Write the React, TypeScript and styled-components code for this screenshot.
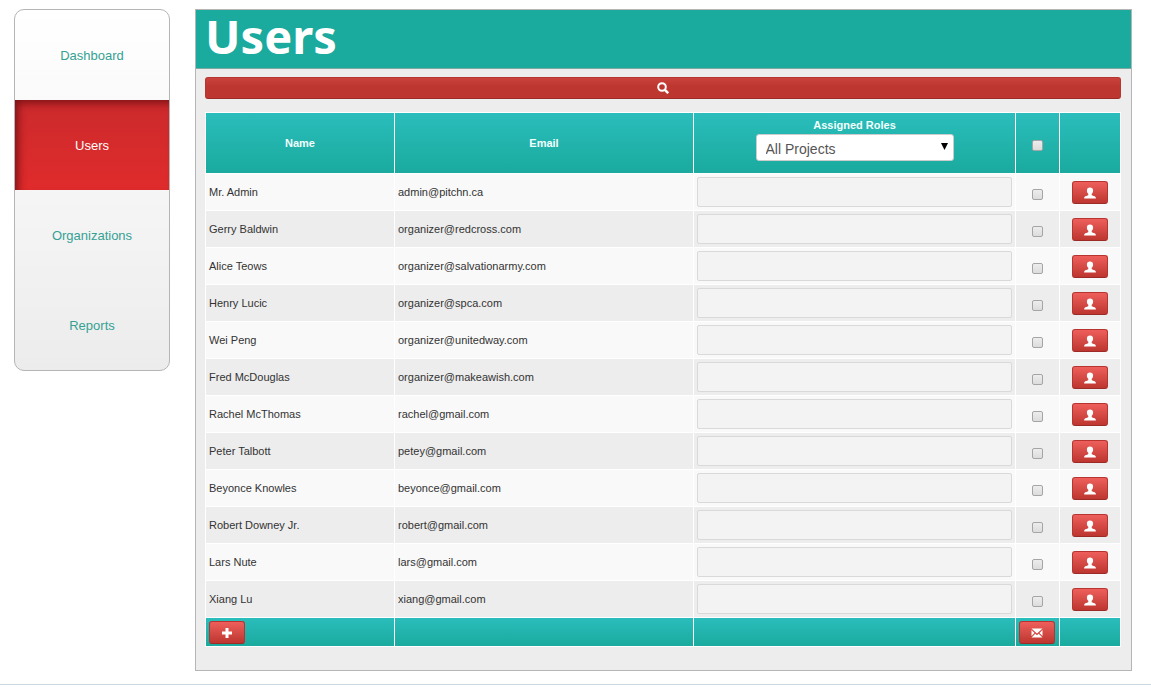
import React from "react";
import styled, { createGlobalStyle, css } from "styled-components";

const Global = createGlobalStyle`
  * { box-sizing: border-box; }
  body {
    margin: 0;
    background: #fff;
    color: #333;
    font: 11px/20px "Liberation Sans", Arial, sans-serif;
  }
`;

const Layout = styled.div`
  display: flex;
  align-items: flex-start;
  gap: 25px;
  padding: 9px 19px 13px 14px;
`;

const Sidebar = styled.nav`
  flex: 0 0 156px;
  display: flex;
  flex-direction: column;
  border: 1px solid #b5b5b5;
  border-radius: 10px;
  overflow: hidden;
  background: linear-gradient(#fff, #ececec);
`;

const NavLink = styled.a<{ $active?: boolean }>`
  padding-top: 2px;
  line-height: 88px;
  font-size: 13px;
  text-align: center;
  text-decoration: none;
  color: #35a193;
  ${(p) =>
    p.$active &&
    css`
      color: #fff;
      background: linear-gradient(#cb2a2d, #e02b2b);
      box-shadow: inset 5px 5px 8px -2px #7c1214;
    `}
`;

const Panel = styled.main`
  flex: 1;
  min-width: 0;
  border: 1px solid #b5b5b5;
  background: #ededed;
`;

const PanelHeader = styled.header`
  padding: 0 9px;
  background: #1aaa9e;
  border-bottom: 1px solid #7fa8a3;
`;

const Title = styled.h1`
  margin: 0;
  padding-bottom: 6px;
  color: #fff;
  font: bold 47px/52px "Noto Sans", "Open Sans", sans-serif;
`;

const PanelBody = styled.div`
  padding: 8px 10px 23px 9px;
`;

const redButton = css`
  display: inline-flex;
  align-items: center;
  justify-content: center;
  padding: 0;
  border: 1px solid #b73531;
  border-bottom-color: #9c2a26;
  border-radius: 3px;
  color: #fff;
  cursor: pointer;
`;

const SearchButton = styled.button`
  ${redButton}
  width: 100%;
  height: 22px;
  margin-bottom: 13px;
  background: linear-gradient(#c9423d, #bd362f 40%);
`;

const IconButton = styled.button`
  ${redButton}
  width: 36px;
  height: 23px;
  padding-top: 1px;
  vertical-align: top;
  background: linear-gradient(#ee5f5b, #bd362f);
`;

const Table = styled.table`
  width: 100%;
  table-layout: fixed;
  border-collapse: separate;
  border-spacing: 0;
  border-top: 1px solid #fff;
  border-left: 1px solid #fff;
`;

const Col = styled.col<{ $width?: number }>`
  ${(p) => p.$width && `width: ${p.$width}px;`}
`;

const tealCell = css`
  border-right: 1px solid #fff;
  border-bottom: 1px solid #fff;
  background: linear-gradient(#2abdbb, #1aaa9e);
`;

const HeadCell = styled.th<{ $top?: boolean }>`
  ${tealCell}
  height: 61px;
  padding: 3px;
  color: #f2fffd;
  font-size: 11px;
  line-height: 18px;
  vertical-align: ${(p) => (p.$top ? "top" : "middle")};
`;

const FootCell = styled.td`
  ${tealCell}
  height: 29px;
  padding: 3px 3px 2px;
`;

const Row = styled.tr`
  background: #f9f9f9;
  &:nth-child(even) {
    background: #ededed;
  }
`;

const Cell = styled.td<{ $center?: boolean }>`
  height: 37px;
  padding: 0 3px;
  border-right: 1px solid #fff;
  border-bottom: 1px solid #fff;
  text-align: ${(p) => (p.$center ? "center" : "left")};
`;

const RolesInput = styled.input`
  display: block;
  width: 100%;
  height: 30px;
  padding: 4px 6px;
  border: 1px solid #d9d9d9;
  border-radius: 2px;
  background: #f3f3f3;
`;

const Checkbox = styled.input.attrs({ type: "checkbox" })`
  appearance: none;
  display: block;
  width: 11px;
  height: 11px;
  margin: 4px auto 0;
  border: 1px solid #a5a5a5;
  border-radius: 2px;
  background: linear-gradient(#ededed, #dcdcdc);
  &:checked {
    background: #bd362f;
  }
`;

const SelectBox = styled.div`
  display: grid;
  width: 198px;
  margin: 0 auto;
  align-items: center;
  & > * {
    grid-area: 1 / 1;
  }
`;

const Select = styled.select`
  appearance: none;
  width: 100%;
  height: 27px;
  padding: 2px 9px 0;
  border: 1px solid #ccc;
  border-radius: 3px;
  background: #fff;
  color: #555;
  font: 14px "Liberation Sans", Arial, sans-serif;
`;

const Arrow = styled.svg`
  justify-self: end;
  margin: 0 6px 2px 0;
  pointer-events: none;
`;

const PageFooter = styled.footer`
  border-top: 1px solid #ccd9e2;
`;

const SearchIcon = () => (
  <svg width="12" height="12" viewBox="0 0 12 12" fill="none" stroke="#fff" strokeWidth="2" aria-hidden="true">
    <circle cx="5" cy="5" r="3.8" />
    <path d="M7.700 7.700l3.500 3.500" strokeWidth="2.500" />
  </svg>
);

const UserIcon = () => (
  <svg width="12" height="12" viewBox="0 0 12 12" fill="#fff" aria-hidden="true">
    <path d="M6 .4c2 0 3.100 1.200 3.100 3 0 1.500-.6 2.700-1.400 3.400v1.100c.5.700 3.200 1 3.800 2 .3.500.4 1 .4 1.600H.1c0-.6.1-1.100.4-1.600.6-1 3.300-1.300 3.800-2V6.800C3.500 6.100 2.900 4.900 2.900 3.400 2.900 1.600 4 .4 6 .4z" />
  </svg>
);

const PlusIcon = () => (
  <svg width="12" height="12" viewBox="0 0 12 12" fill="#fff" aria-hidden="true">
    <path d="M4.500 1h3v3.500H11v3H7.500V11h-3V7.500H1v-3h3.500z" />
  </svg>
);

const MailIcon = () => (
  <svg width="12" height="12" viewBox="0 0 12 12" fill="#fff" aria-hidden="true">
    <path d="M.5 1.500h11L6 6.600zM.5 2.900L3.500 6 .5 9.100zM11.500 2.900v6.200L8.500 6zM4.300 6.800L6 8.300l1.700-1.500 3.800 3.700H.5z" />
  </svg>
);

const nav = ["Dashboard", "Users", "Organizations", "Reports"];

const users = [
  ["Mr. Admin", "admin@pitchn.ca"],
  ["Gerry Baldwin", "organizer@redcross.com"],
  ["Alice Teows", "organizer@salvationarmy.com"],
  ["Henry Lucic", "organizer@spca.com"],
  ["Wei Peng", "organizer@unitedway.com"],
  ["Fred McDouglas", "organizer@makeawish.com"],
  ["Rachel McThomas", "rachel@gmail.com"],
  ["Peter Talbott", "petey@gmail.com"],
  ["Beyonce Knowles", "beyonce@gmail.com"],
  ["Robert Downey Jr.", "robert@gmail.com"],
  ["Lars Nute", "lars@gmail.com"],
  ["Xiang Lu", "xiang@gmail.com"],
];

export default function App() {
  return (
    <>
      <Global />
      <Layout>
        <Sidebar>
          {nav.map((item) => (
            <NavLink key={item} href={`#${item.toLowerCase()}`} $active={item === "Users"}>
              {item}
            </NavLink>
          ))}
        </Sidebar>
        <Panel>
          <PanelHeader>
            <Title>Users</Title>
          </PanelHeader>
          <PanelBody>
            <SearchButton type="button" aria-label="Search">
              <SearchIcon />
            </SearchButton>
            <Table>
              <colgroup>
                <Col $width={189} />
                <Col $width={299} />
                <Col />
                <Col $width={44} />
                <Col $width={61} />
              </colgroup>
              <thead>
                <tr>
                  <HeadCell>Name</HeadCell>
                  <HeadCell>Email</HeadCell>
                  <HeadCell $top>
                    <label htmlFor="project">Assigned Roles</label>
                    <SelectBox>
                      <Select id="project">
                        <option>All Projects</option>
                      </Select>
                      <Arrow width="7" height="7" viewBox="0 0 7 7" aria-hidden="true">
                        <path d="M0 0h7L3.500 7z" fill="#000" />
                      </Arrow>
                    </SelectBox>
                  </HeadCell>
                  <HeadCell>
                    <Checkbox aria-label="Select all users" />
                  </HeadCell>
                  <HeadCell />
                </tr>
              </thead>
              <tbody>
                {users.map(([name, email]) => (
                  <Row key={email}>
                    <Cell>{name}</Cell>
                    <Cell>{email}</Cell>
                    <Cell>
                      <RolesInput aria-label={`Roles of ${name}`} />
                    </Cell>
                    <Cell $center>
                      <Checkbox aria-label={`Select ${name}`} />
                    </Cell>
                    <Cell $center>
                      <IconButton type="button" aria-label={`Profile of ${name}`}>
                        <UserIcon />
                      </IconButton>
                    </Cell>
                  </Row>
                ))}
              </tbody>
              <tfoot>
                <tr>
                  <FootCell>
                    <IconButton type="button" aria-label="Add user">
                      <PlusIcon />
                    </IconButton>
                  </FootCell>
                  <FootCell />
                  <FootCell />
                  <FootCell>
                    <IconButton type="button" aria-label="Email selected users">
                      <MailIcon />
                    </IconButton>
                  </FootCell>
                  <FootCell />
                </tr>
              </tfoot>
            </Table>
          </PanelBody>
        </Panel>
      </Layout>
      <PageFooter />
    </>
  );
}
